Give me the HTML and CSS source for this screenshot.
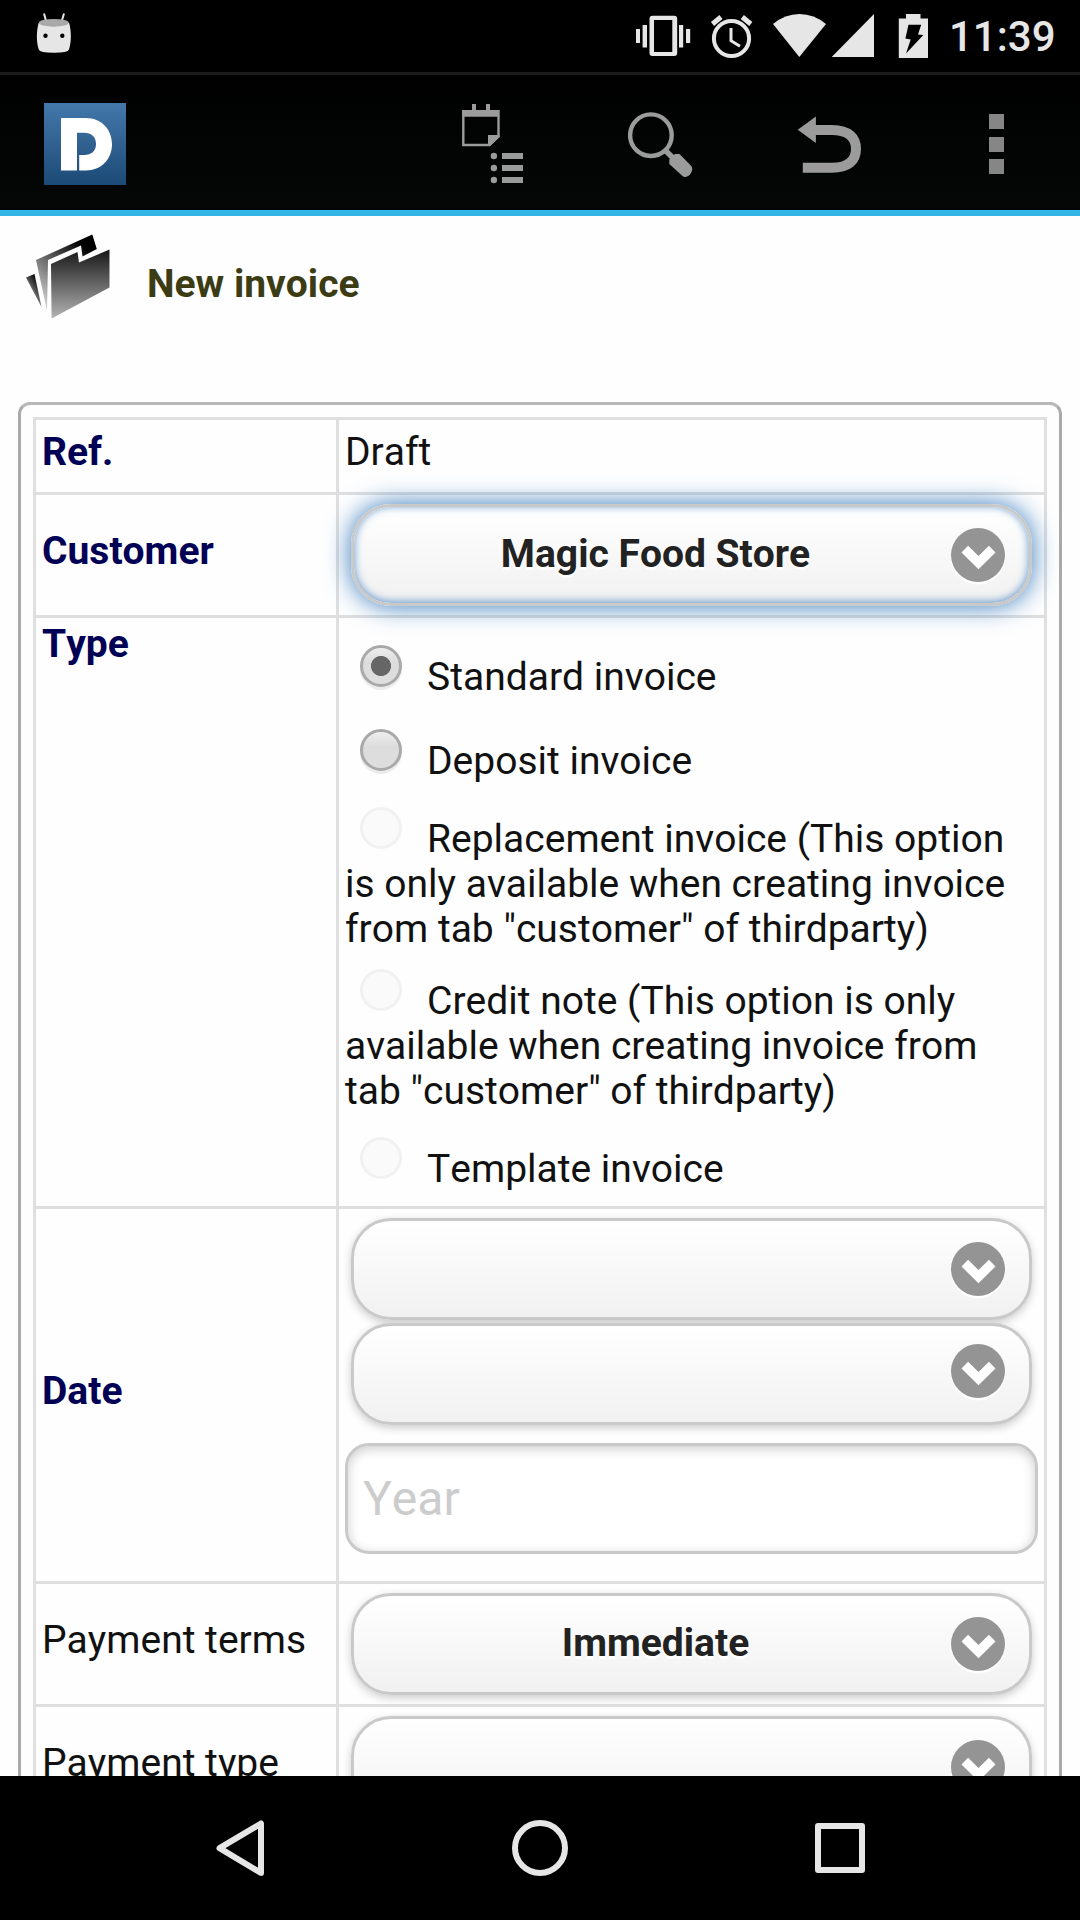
FILE: index.html
```html
<!DOCTYPE html>
<html lang="en">
<head>
<meta charset="utf-8">
<title>New invoice</title>
<link rel="stylesheet" href="styles.css">
</head>
<body>
<svg class="defs" width="0" height="0" aria-hidden="true">
  <defs>
    <linearGradient id="logo-fill" x1="0" y1="0" x2="0" y2="1"><stop offset="0" stop-color="#4478ab"/><stop offset="1" stop-color="#1b4a76"/></linearGradient>
    <linearGradient id="folder-front" x1="0" y1="0" x2="0" y2="1"><stop offset="0" stop-color="#161616"/><stop offset="1" stop-color="#b4b4b4"/></linearGradient>
    <linearGradient id="folder-back" x1="1" y1="0" x2="0.3" y2="1"><stop offset="0.2" stop-color="#000"/><stop offset="1" stop-color="#ccc"/></linearGradient>
    <symbol id="chevron" viewBox="0 0 54 57">
      <circle cx="27" cy="29.5" r="27" fill="#fff"/>
      <circle cx="27" cy="27" r="27" fill="#949494"/>
      <path d="M13.8 21.2 27.5 34.6 41.200 21.2" fill="none" stroke="#fff" stroke-width="9.4" stroke-linejoin="miter"/>
    </symbol>
  </defs>
</svg>
<div class="screen">
  <div class="statusbar">
    <svg class="droid" viewBox="36 0 36 72" width="36" height="72">
      <path d="M44 13.5 46 21M64 13.5 61.8 21" stroke="#e6e6e6" stroke-width="2"/>
      <path d="M38.6 23H69.2C71.4 31 71.5 42 69 49.5Q68 52.8 53.8 52.8T38.8 49.5C36.2 42 36.4 31 38.6 23Z" fill="#e6e6e6"/>
      <ellipse cx="53.8" cy="22.8" rx="15" ry="3.9" fill="#a9a9a9"/>
      <circle cx="45.5" cy="35.8" r="2.2"/><circle cx="62.3" cy="35.8" r="2.2"/>
    </svg>
    <svg viewBox="636 0 292 72" width="292" height="72" fill="#e6e6e6">
      <path fill-rule="evenodd" d="M652.500 15.700H674.200A3 3 0 0 1 677.200 18.700V53A3 3 0 0 1 674.200 56H652.500A3 3 0 0 1 649.500 53V18.700A3 3 0 0 1 652.500 15.700ZM654 20V52H672.300V20Z"/>
      <path d="M642.600 25H647V47.500H642.600ZM636 29H640V43H636ZM679 25H683.200V47.500H679ZM686 29H690.200V43H686Z"/>
      <circle cx="731.500" cy="38.500" r="17.600" fill="none" stroke="#e6e6e6" stroke-width="4"/>
      <path d="M731 28V40.700L740 46.200" fill="none" stroke="#e6e6e6" stroke-width="3"/>
      <path d="M712.500 24 721 17M750.800 24 742.300 17" stroke="#e6e6e6" stroke-width="5" fill="none"/>
      <path d="M799.300 57 773 24Q785 14 799.500 14T826 24Z"/>
      <path d="M831.700 57H874V14Z"/>
      <path fill-rule="evenodd" d="M898.800 18.500H906V14H920.500V18.500H928V58H898.800ZM908.500 24.700 905.400 38.500 910.700 39.500 906 53.500 923.300 35 918 34.500 921.200 24.700Z"/>
    </svg>
    <span class="clock">11:39</span>
  </div>

  <div class="actionbar">
    <svg class="logo" viewBox="44 103 82 82" width="82" height="82">
      <rect x="44" y="103" width="82" height="82" fill="url(#logo-fill)"/>
      <path d="M61 118H86C101 118 112 129 112 144.300S101 170.500 86 170.500H79.200V155H84C91.500 155 96 151 96 144S91.500 132.800 84 132.800H77V170.500H61Z" fill="#fff"/>
    </svg>
    <svg class="notes" viewBox="462 103 62 82" width="62" height="82" fill="#9b9b9b">
      <path d="M472 104H476V111H472ZM486 104H490V111H486ZM462 110H499.700V116.700H462Z"/>
      <path d="M463.300 116V145H489.500L498.500 136.500V116" fill="none" stroke="#9b9b9b" stroke-width="2.400"/>
      <path d="M488 135H499.500V137L490 146H488Z"/>
      <circle cx="493.900" cy="156" r="3.200"/><circle cx="493.900" cy="168" r="3.200"/><circle cx="493.900" cy="180" r="3.200"/>
      <path d="M502 153H523V159H502ZM502 165H523V171H502ZM502 177H523V183H502Z"/>
    </svg>
    <svg class="search" viewBox="628 111 66 66" width="66" height="66" fill="#9b9b9b">
      <circle cx="650.900" cy="135.200" r="20.800" fill="none" stroke="#9b9b9b" stroke-width="4.400"/>
      <path d="M666 151 673 158" stroke="#9b9b9b" stroke-width="5.500"/>
      <path d="M669.300 164V159.500L675 154H679.500L691.300 166Q692.600 168 692.200 170 691 175 686.500 176.700 684 177.300 682.500 176Z"/>
    </svg>
    <svg class="back" viewBox="797 111 66 66" width="66" height="66">
      <path d="M797.700 129.800 815.900 116.500V143Z" fill="#9b9b9b"/>
      <path d="M814 130H832C849 130 856 138 856 149S849 167.800 832 167.800H802.800" fill="none" stroke="#9b9b9b" stroke-width="10"/>
    </svg>
    <div class="overflow"><i></i><i></i><i></i></div>
  </div>

  <main class="content">
    <div class="title">
      <svg viewBox="24 231 90 92" width="90" height="92">
        <path d="M26 277.500 34.500 274 41.500 307Z" fill="url(#folder-back)"/>
        <path d="M36 260 92.300 234.500 96.800 249 82.500 256.500 81 245.500 48 260 47 311Z" fill="url(#folder-back)"/>
        <path d="M51 264 77.500 252 79 262.500 109.500 249.500V287.500L51.600 318.500Z" fill="url(#folder-front)"/>
      </svg>
      <h1>New invoice</h1>
    </div>
    <div class="panel">
      <div class="form">
        <div class="row ref"><div class="label req">Ref.</div><div class="value">Draft</div></div>
        <div class="row"><div class="label req">Customer</div>
          <div class="field"><div class="select focus"><span>Magic Food Store</span><svg class="arrow"><use href="#chevron"/></svg></div></div></div>
        <div class="row types"><div class="label req top">Type</div>
          <div class="options">
            <p><i class="radio on"></i>Standard invoice</p>
            <p><i class="radio"></i>Deposit invoice</p>
            <p><i class="radio off"></i>Replacement invoice (This option<br>is only available when creating invoice<br>from tab "customer" of thirdparty)</p>
            <p><i class="radio off"></i>Credit note (This option is only<br>available when creating invoice from<br>tab "customer" of thirdparty)</p>
            <p><i class="radio off"></i>Template invoice</p>
          </div></div>
        <div class="row date"><div class="label req">Date</div>
          <div class="field">
            <div class="select"><svg class="arrow"><use href="#chevron"/></svg></div>
            <div class="select second"><svg class="arrow"><use href="#chevron"/></svg></div>
            <div class="input">Year</div>
          </div></div>
        <div class="row"><div class="label">Payment terms</div>
          <div class="field"><div class="select"><span>Immediate</span><svg class="arrow"><use href="#chevron"/></svg></div></div></div>
        <div class="row"><div class="label">Payment type</div>
          <div class="field"><div class="select"><svg class="arrow"><use href="#chevron"/></svg></div></div></div>
      </div>
    </div>
  </main>

  <nav class="navbar">
    <svg viewBox="216 1820 48 56" width="48" height="56"><path d="M219.500 1848.200 261 1823.500V1873Z"/></svg>
    <svg viewBox="512 1820 56 56" width="56" height="56"><circle cx="540" cy="1848" r="25"/></svg>
    <svg viewBox="815 1820 50 56" width="50" height="56"><rect x="818" y="1826" width="44" height="44"/></svg>
  </nav>
</div>
</body>
</html>
```
FILE: styles.css
```css
* { box-sizing: border-box; }
body { margin: 0; background: #000; font-family: Roboto, sans-serif; font-kerning: none; }
svg { display: block; flex: none; }
.defs { position: absolute; }
.screen { width: 1080px; height: 1920px; display: flex; flex-direction: column; overflow: hidden; }

.statusbar { height: 72px; flex: none; display: flex; padding-left: 36px; background: #000; color: #e6e6e6; }
.droid { margin-right: 564px; }
.clock { margin-left: 21px; font-size: 42px; font-weight: 500; line-height: 74px; }

.actionbar { height: 144px; flex: none; display: flex; align-items: center; padding: 3px 0 0 44px; border-top: 3px solid #1c1c1c; border-bottom: 6px solid #33b5e5; background: linear-gradient(#000, #050707); }
.notes { margin-left: 336px; }
.search { margin-left: 104px; }
.back { margin-left: 103px; }
.overflow { margin-left: 126px; height: 60px; display: flex; flex-direction: column; justify-content: space-between; }
.overflow i { width: 15px; height: 15px; background: #868686; }

.content { height: 1560px; flex: none; overflow: hidden; background: #fefefe; color: #111; font-size: 39px; line-height: 45px; }
.title { height: 186px; display: flex; padding: 15px 24px; gap: 33px; }
.title h1 { margin: 31px 0 0; font-size: 39px; line-height: 45px; font-weight: 700; color: #3c3c14; }
.panel { margin: 0 18px; padding: 12px; height: 1500px; border: 3px solid #aaa; border-top-color: #b7b7b7; border-radius: 12px; }
.form { border: 3px solid #dfdfdf; border-bottom: 0; }
.row { display: grid; grid-template-columns: 303px 1fr; height: 123px; border-bottom: 3px solid #dfdfdf; }
.row.ref { height: 75px; }
.row.types { height: 591px; }
.row.date { height: 375px; }
.label { display: flex; align-items: center; padding: 0 0 7px 6px; border-right: 3px solid #dfdfdf; white-space: nowrap; }
.label.req { font-weight: 700; color: #000055; }
.label.top { align-items: flex-start; padding-top: 4px; }
.value { padding: 10px 6px 0; }
.field { padding: 9px 12px; }
.select { height: 102px; display: flex; justify-content: center; padding: 25px 72px 0 0; position: relative; border: 3px solid #c9c9c9; border-radius: 40px; background: linear-gradient(#fff, #f1f1f1); box-shadow: 0 3px 9px rgba(0, 0, 0, .2); font-weight: 700; color: #222; text-shadow: 0 3px 0 #fff; }
.select.focus { box-shadow: inset 0 -1px 9px rgba(56, 123, 190, .8), 0 0 26px #387bbe; }
.select.second { margin-top: 3px; }
.arrow { position: absolute; width: 54px; height: 57px; right: 24px; top: 21px; }
.second .arrow { top: 18px; }
.input { height: 111px; margin: 18px -6px 0; padding: 0 15px; border: 3px solid #c9c9c9; border-radius: 24px; background: #fff; box-shadow: inset 0 3px 12px rgba(0, 0, 0, .2); font-size: 48px; line-height: 106px; color: #ccc; }

.options { padding: 37px 0 0 6px; display: flex; flex-direction: column; }
.options p { margin: 0; white-space: nowrap; }
.options p:nth-child(2) { margin-top: 39px; }
.options p:nth-child(3), .options p:nth-child(5) { margin-top: 33px; }
.options p:nth-child(4) { margin-top: 27px; }
.radio { display: inline-block; width: 42px; height: 42px; margin: -10px 25px 0 15px; vertical-align: top; border: 3px solid #a9a9a9; border-radius: 50%; background: linear-gradient(#eee, #dcdcdc 40%, #dedede); box-shadow: 0 3px 0 #ececec; }
.radio.on { background: radial-gradient(circle at center, #666 9.6px, transparent 10.4px), linear-gradient(#eee, #dcdcdc 40%, #dedede); }
.radio.off { border-color: #f1f1f1; background: #fafafa; box-shadow: none; }

.navbar { height: 144px; flex: none; display: flex; align-items: center; padding-left: 216px; background: #000; }
.navbar svg { fill: none; stroke: #e6e6e6; stroke-width: 6; stroke-linejoin: round; }
.navbar svg + svg { margin-left: 248px; }
.navbar svg:last-child { margin-left: 247px; }
```
